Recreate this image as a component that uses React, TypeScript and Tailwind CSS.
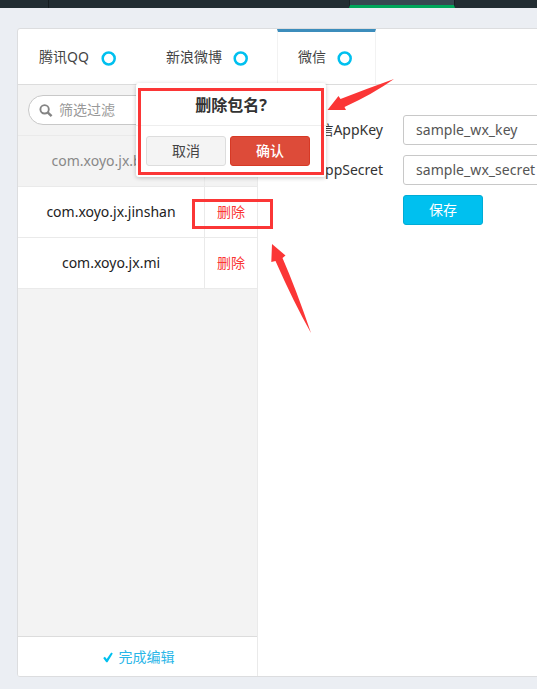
import React from "react";

const Ring = ({ className }: { className: string }) => (
  <svg width="15" height="15" viewBox="0 0 15 15" className={`mt-[2px] shrink-0 ${className}`}>
    <circle cx="7.7" cy="7.5" r="6" fill="none" stroke="#00c0ef" strokeWidth="2.5" />
  </svg>
);

const CheckIcon = () => (
  <svg width="10" height="11" viewBox="0 0 10 11" className="mt-[2px] mr-[6px]">
    <path d="M0.2 6.1 L1.9 4.7 L3.7 7 L8.2 0.6 L9.8 1.4 L4.5 10.2 L3.2 10.2 Z" fill="#00c0ef" />
  </svg>
);

const SearchIcon = () => (
  <svg width="14" height="14" viewBox="0 0 14 14" fill="none" stroke="#848484" className="mt-[2px]">
    <circle cx="5.6" cy="5.3" r="4.2" strokeWidth="1.9" />
    <path d="M8.6 8.4 L12.6 12.2" strokeWidth="2.5" />
  </svg>
);

function PackageRow({ name, muted }: { name: string; muted?: boolean }) {
  return (
    <div className={`flex h-[51px] border-b border-[#eaeaea] ${muted ? "text-[#888]" : "bg-white text-[#222]"}`}>
      <div className="flex w-[186px] items-center justify-center">{name}</div>
      <div className="flex flex-1 items-center justify-center border-l border-[#eaeaea] text-[#fa3535]">
        {muted ? "" : "删除"}
      </div>
    </div>
  );
}

function Field({ label, value }: { label: string; value: string }) {
  return (
    <div className="flex h-[30px] items-center">
      <label className="w-[125px] text-right text-[#333]">{label}</label>
      <div className="ml-5 flex h-[30px] w-[220px] items-center rounded-[3px] border border-[#c8c8c8] px-3 tracking-[0.05px] text-[#555]">
        {value}
      </div>
    </div>
  );
}

export default function App() {
  return (
    <div className="relative h-[689px] w-[537px] overflow-hidden bg-[#ebeef3] font-['Noto_Sans','Noto_Sans_CJK_SC',sans-serif] text-[14px] leading-5">
      <header className="flex h-2 bg-[#222d32]">
        <div className="w-[49px] border-r border-[#151c1f]" />
        <div className="w-[300px]" />
        <div className="w-[106px] border-x border-b-[3px] border-x-[#182024] border-b-[#00a65a] bg-[#374850]" />
      </header>

      <main className="mt-5 ml-[17px] flex h-[649px] w-[620px] flex-col overflow-hidden rounded-[3px] border border-[#dcdddf] bg-white">
        <nav className="flex h-14 shrink-0 border-b border-[#dcdcdc] text-[#444]">
          <div className="flex w-[126px] items-center pt-px pl-[21px]">
            <span className="w-[51px] whitespace-nowrap">腾讯QQ</span>
            <Ring className="ml-[11px]" />
          </div>
          <div className="flex w-[133px] items-center pt-px pl-[22px]">
            <span className="w-14">新浪微博</span>
            <Ring className="ml-[11px]" />
          </div>
          <div className="flex w-[99px] items-center border-x border-t-[3px] border-x-[#f2f2f2] border-t-[#3c8dbc] pb-[2px] pl-5">
            <span className="w-7">微信</span>
            <Ring className="ml-[11px]" />
          </div>
        </nav>

        <div className="flex min-h-0 flex-1">
          <aside className="flex w-60 flex-col border-r border-[#eaeaea] bg-[#f3f3f3]">
            <div className="flex h-[51px] shrink-0 items-center border-b border-[#eaeaea] px-[10px]">
              <div className="flex h-[30px] w-full items-center gap-[6px] rounded-full border border-[#c8c8c8] bg-white pl-[10px] text-[#999]">
                <SearchIcon />
                <span>筛选过滤</span>
              </div>
            </div>
            <PackageRow name="com.xoyo.jx.baidu" muted />
            <PackageRow name="com.xoyo.jx.jinshan" />
            <PackageRow name="com.xoyo.jx.mi" />
            <div className="flex-1" />
            <div className="flex h-10 shrink-0 items-center justify-center border-t border-[#dcdcdc] bg-white pl-[2px] text-[#29b6e8]">
              <CheckIcon />
              <span>完成编辑</span>
            </div>
          </aside>

          <section className="flex flex-1 flex-col gap-[10px] pt-[30px]">
            <Field label="微信AppKey" value="sample_wx_key" />
            <Field label="微信AppSecret" value="sample_wx_secret" />
            <button className="ml-[145px] h-[30px] w-20 rounded-[3px] border border-[#00acd6] bg-[#00c0ef] text-white">
              保存
            </button>
          </section>
        </div>
      </main>

      <div className="absolute top-[83px] left-[136px] h-[94px] w-[190px] rounded-[3px] bg-white shadow-[0_1px_4px_rgba(0,0,0,0.22)]">
        <h3 className="flex h-[43px] items-center justify-center border-b border-[#eee] pt-[2px] text-[16px] font-bold text-[#333]">
          删除包名?
        </h3>
        <div className="mt-[10px] ml-[10px] flex gap-1">
          <button className="h-[30px] w-20 rounded-[3px] border border-[#ddd] bg-[#f4f4f4] text-[#444]">取消</button>
          <button className="h-[30px] w-20 rounded-[3px] border border-[#d73925] bg-[#dd4b39] font-medium text-white">
            确认
          </button>
        </div>
      </div>

      <div className="absolute top-[88px] left-[138px] h-[87px] w-[186px] border-[3px] border-[#fb3636]" />
      <div className="absolute top-[199px] left-[192px] h-[30px] w-[81px] border-[3px] border-[#fb3636]" />
      <svg className="absolute top-0 left-0" width="537" height="689" viewBox="0 0 537 689" fill="#fb3636">
        <path d="M327.5 110 L338.5 96 L340.5 99 Q366 89 394 79 Q373 94 344.5 107 L346 110 Z" />
        <path d="M272 244 L285.5 255.5 L282.5 258 Q296 289 311 333 Q294 303 275.5 261 L271.3 262 Z" />
      </svg>
    </div>
  );
}
